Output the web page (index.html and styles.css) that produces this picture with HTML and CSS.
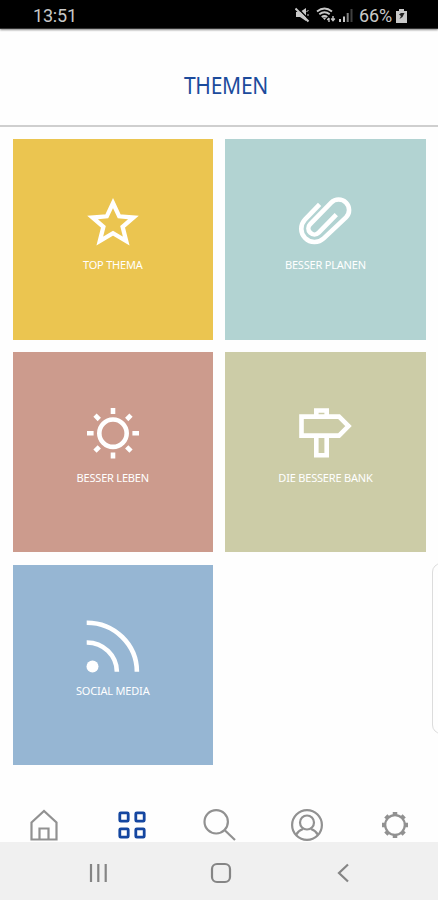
FILE: index.html
```html
<!DOCTYPE html>
<html lang="de">
<head>
    <meta charset="UTF-8">
    <meta name="viewport" content="width=device-width, initial-scale=1.0">
    <title>Themen</title>
    <link rel="stylesheet" href="styles.css">
</head>
<body>

    <div class="statusbar">
        <span class="time">13:51</span>
        <div class="status-icons">
            <svg class="mute" width="15" height="16" viewBox="0 0 15 16">
                <path d="M1 5h4l6-4v13l-6-4H1z" fill="#c8c8c8"/>
                <path d="M1.500 0l13 13" stroke="#000" stroke-width="1.500"/>
                <path d="M.5 1.500l13 13" stroke="#c8c8c8" stroke-width="2"/>
                <path d="M11.500 5l2-2M12 8h2" stroke="#c8c8c8"/>
            </svg>
            <svg class="wifi" width="20" height="16" viewBox="0 0 20 16" fill="none" stroke="#c8c8c8" stroke-width="1.900">
                <path d="M1 4.500q7.500-6 15 0M3.300 7.300q5.200-4 10.400 0M5.700 10q2.800-2.200 5.600 0"/>
                <path d="M6.500 10.500h4l-2 2.500z" fill="#c8c8c8" stroke="none"/>
                <path d="M13 15v-4M11.300 13l1.700-2M17 9v5M15.200 11.500l1.800 2.200 1.800-2.200" stroke-width="1.400"/>
            </svg>
            <svg class="signal" width="14" height="16" viewBox="0 0 14 16">
                <path d="M0 12h2v3H0zM4 9.500h2V15H4z" fill="#c8c8c8"/>
                <path d="M7.700 6h2v9h-2z" fill="#808080"/>
                <path d="M11.500 2h2v13h-2z" fill="#404040"/>
            </svg>
            <span class="percent">66%</span>
            <svg class="battery" width="11" height="15" viewBox="0 0 11 15">
                <path d="M3 1h5v2h3v12H0V3h3z" fill="#c8c8c8"/>
                <path d="M3 6.500l2-1.500h3.500L6.500 9 3.500 11l1.500-3z" fill="#222"/>
            </svg>
        </div>
    </div>

    <header class="header">
        <h1>THEMEN</h1>
    </header>

    <main class="topics">
        <a class="tile yellow">
            <svg class="star" width="56" height="56" viewBox="0 0 56 56">
                <path d="M28 9L34.200 22.300 48.500 23.500 37.600 32.800 41.200 47 28 39.200 14.800 47 18.400 32.800 7.500 23.500 21.800 22.300z"/>
            </svg>
            <span class="label">TOP THEMA</span>
        </a>
        <a class="tile mint">
            <svg width="56" height="56" viewBox="0 0 56 56">
                <path d="M22.600 10.400L7.900 25.600A13.300 13.300 0 0 0 26.700 44.400L49 23.400A10.400 10.400 0 0 0 34.200 8.600L13.200 30.200A6 6 0 0 0 21.700 38.700L39.300 20.600"/>
            </svg>
            <span class="label">BESSER PLANEN</span>
        </a>
        <a class="tile rose">
            <svg width="56" height="56" viewBox="0 0 56 56">
                <circle cx="28" cy="27.200" r="13.700"/>
                <path d="M28 2v6M28 46.400v6M2 27.200h6.600M47.400 27.200H54M10 9.200l4.300 4.300M41.700 40.900l4.300 4.300M46 9.200l-4.300 4.300M14.300 40.900L10 45.200"/>
            </svg>
            <span class="label">BESSER LEBEN</span>
        </a>
        <a class="tile olive">
            <svg width="56" height="56" viewBox="0 0 56 56">
                <path d="M4.500 10.600H42L51.500 20 42 29.600H4.500zM19.300 10V4.500h10.400V10M19.300 30v19.200h10.400V30"/>
            </svg>
            <span class="label">DIE BESSERE BANK</span>
        </a>
        <a class="tile blue">
            <svg width="56" height="56" viewBox="0 0 56 56">
                <path d="M1.700 3.700A50 49 0 0 1 51.900 52.700M1.700 23.500A30 29.500 0 0 1 31.900 52.700"/>
                <circle class="dot" cx="7.500" cy="47.500" r="6"/>
            </svg>
            <span class="label">SOCIAL MEDIA</span>
        </a>
    </main>

    <nav class="tabs">
        <svg width="36" height="36" viewBox="0 0 36 36">
            <path d="M5.500 15.500L18 4l12.500 11.500V32.500h-25zM13.500 32V21.500h9V32"/>
        </svg>
        <svg class="active" width="36" height="36" viewBox="0 0 36 36">
            <rect x="5.800" y="5.800" width="8.400" height="8.400" rx="1"/>
            <rect x="21.800" y="5.800" width="8.400" height="8.400" rx="1"/>
            <rect x="5.800" y="21.800" width="8.400" height="8.400" rx="1"/>
            <rect x="21.800" y="21.800" width="8.400" height="8.400" rx="1"/>
        </svg>
        <svg width="36" height="36" viewBox="0 0 36 36">
            <circle cx="14.200" cy="14.800" r="11.700"/>
            <path d="M22 22.500l11 10.500"/>
        </svg>
        <svg width="36" height="36" viewBox="0 0 36 36">
            <circle cx="18" cy="18" r="14.900"/>
            <circle cx="18" cy="15.500" r="7"/>
            <path d="M7 28c2-4 4-5 7-6M29 28c-2-4-4-5-7-6"/>
        </svg>
        <svg width="36" height="36" viewBox="0 0 36 36">
            <circle cx="18" cy="18" r="9.800"/>
            <path class="teeth" d="M18 5v3M18 28v3M5 18h3M28 18h3M8.800 8.800l2.200 2.200M25 25l2.200 2.200M27.200 8.800L25 11M11 25l-2.200 2.200"/>
        </svg>
    </nav>

    <div class="sysbar">
        <svg width="24" height="24" viewBox="0 0 24 24">
            <path d="M5 3v18M12.300 3v18M19.700 3v18"/>
        </svg>
        <svg width="24" height="24" viewBox="0 0 24 24">
            <rect x="3" y="3" width="18" height="18" rx="5"/>
        </svg>
        <svg width="24" height="24" viewBox="0 0 24 24">
            <path d="M17 3.500L8 12l9 8.500"/>
        </svg>
    </div>

    <!-- edge panel handle -->
    <div class="edge"></div>

</body>
</html>
```
FILE: styles.css
```css
body {
    font-family: 'Noto Sans', sans-serif;
    background-color: #fefefe;
    margin: 0;
    height: 900px;
    display: flex;
    flex-direction: column;
    position: relative;
    overflow: hidden;
}

.statusbar {
    height: 29px;
    box-sizing: border-box;
    background-color: #000;
    border-bottom: 1px solid #333;
    box-shadow: 0 1px 2px #888;
    padding: 2px 31px 0 33px;
    display: flex;
    justify-content: space-between;
    align-items: center;
    color: #c8c8c8;
    font-family: Roboto, sans-serif;
    font-size: 18px;
}

.time {
    letter-spacing: -0.2px;
}

.status-icons {
    display: flex;
    align-items: center;
}

.wifi {
    margin-left: 6px;
}

.signal {
    margin-left: 3px;
}

.percent {
    margin: 0 4px 0 6px;
    letter-spacing: -0.1px;
}

.header {
    height: 98px;
    box-sizing: border-box;
    border-bottom: 2px solid #cfcfcf;
    display: flex;
    align-items: center;
    justify-content: center;
    padding-top: 15px;
    padding-left: 13px;
}

h1 {
    margin: 0;
    color: #1c4b9c;
    font-size: 23px;
    line-height: 30px;
    font-weight: 400;
    letter-spacing: -0.3px;
    transform: scaleX(0.915);
}

.topics {
    display: grid;
    grid-template-columns: 200.5px 200.5px;
    grid-auto-rows: 200.5px;
    gap: 12.2px;
    padding: 12.2px 12.5px 0;
    flex: 1;
}

.tile {
    display: flex;
    flex-direction: column;
    align-items: center;
    padding-top: 54.5px;
    box-sizing: border-box;
}

.tile svg {
    fill: none;
    stroke: #fff;
    stroke-width: 4.6;
}

.tile .star {
    stroke-width: 4.3;
}

.tile .dot {
    fill: #fff;
    stroke: none;
}

.label {
    color: #fff;
    font-size: 11px;
    line-height: 14px;
    margin-top: 8.5px;
    white-space: nowrap;
    letter-spacing: -0.2px;
}

.yellow { background-color: #ebc550; }
.mint { background-color: #b2d3d2; }
.rose { background-color: #cc9b8d; }
.olive { background-color: #cccca7; }
.blue { background-color: #96b6d3; }

.tabs {
    height: 52px;
    box-sizing: border-box;
    display: flex;
    align-items: flex-end;
    justify-content: space-between;
    padding: 0 25px 0 26px;
}

.tabs svg {
    fill: none;
    stroke: #919191;
    stroke-width: 2.2;
    margin-bottom: -1px;
}

.tabs .active {
    stroke: #1446a0;
    stroke-width: 2.8;
}

.tabs .teeth {
    stroke-width: 4.5;
}

.sysbar {
    height: 58px;
    background-color: #f0f0f0;
    display: flex;
    align-items: center;
    justify-content: space-between;
    padding: 0 83px 0 86px;
}

.sysbar svg {
    fill: none;
    stroke: #858585;
    stroke-width: 2.2;
    margin-top: 3px;
}

.edge {
    position: absolute;
    top: 563px;
    right: -12px;
    width: 16px;
    height: 169px;
    border: 1.5px solid #dcdcdc;
    border-radius: 10px;
    background-color: #fefefe;
}
```
